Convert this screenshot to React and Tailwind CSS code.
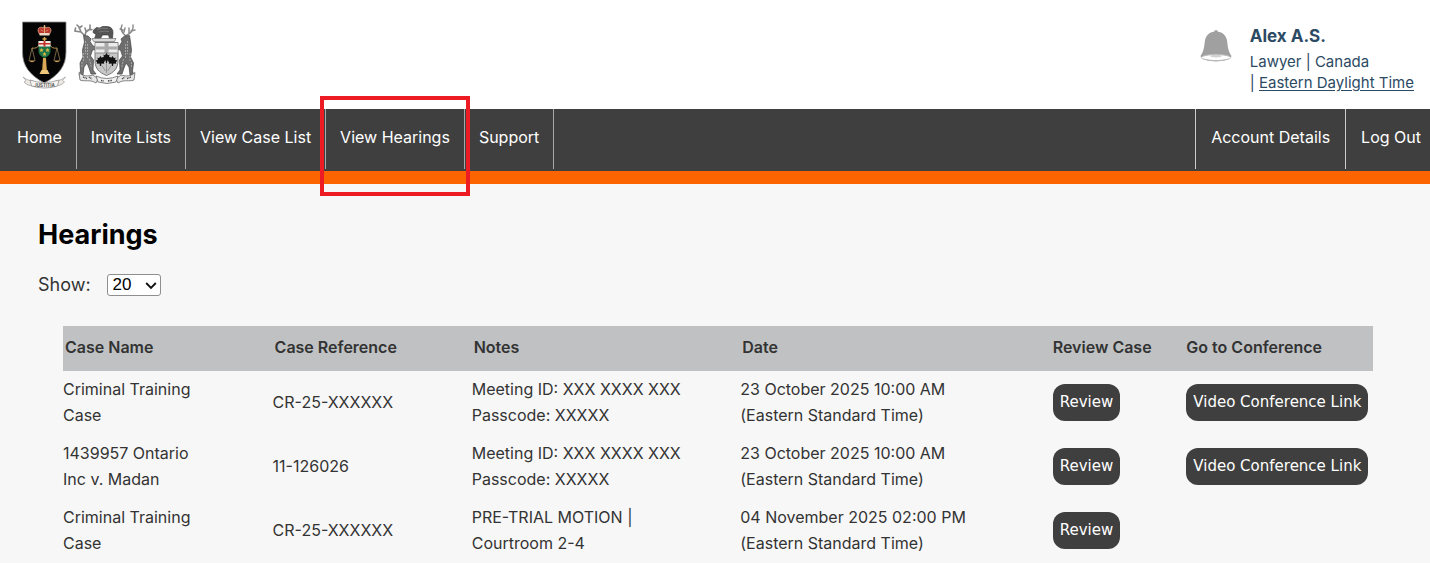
import { useState } from "react";

const mainLinks = ["Home", "Invite Lists", "View Case List", "View Hearings", "Support"];
const accountLinks = ["Account Details", "Log Out"];

const columns = [
  { label: "Case Name", width: "w-[16%]" },
  { label: "Case Reference", width: "w-[15.2%]" },
  { label: "Notes", width: "w-[20.5%]" },
  { label: "Date", width: "w-[23.7%]" },
  { label: "Review Case", width: "w-[10.2%]" },
  { label: "Go to Conference", width: "w-[14.4%]" },
];

const hearings = [
  {
    id: 1,
    name: "Criminal Training Case",
    reference: "CR-25-XXXXXX",
    notes: "Meeting ID: XXX XXXX XXX Passcode: XXXXX",
    date: "23 October 2025 10:00 AM (Eastern Standard Time)",
    conference: true,
  },
  {
    id: 2,
    name: "1439957 Ontario Inc v. Madan",
    reference: "11-126026",
    notes: "Meeting ID: XXX XXXX XXX Passcode: XXXXX",
    date: "23 October 2025 10:00 AM (Eastern Standard Time)",
    conference: true,
  },
  {
    id: 3,
    name: "Criminal Training Case",
    reference: "CR-25-XXXXXX",
    notes: "PRE-TRIAL MOTION | Courtroom 2-4",
    date: "04 November 2025 02:00 PM (Eastern Standard Time)",
    conference: false,
  },
];

export default function App() {
  const [pageSize, setPageSize] = useState("20");

  return (
    <div className="min-h-screen bg-[#f7f7f7] font-['Inter',sans-serif] text-base text-[#333]">
      <Header />
      <NavBar />

      <main className="pt-[33px] pl-[38px] pr-[57px]">
        <h1 className="text-[27px] leading-9 font-bold text-black">Hearings</h1>

        <div className="flex items-center gap-4 mt-4">
          <label htmlFor="page-size" className="text-lg leading-8">
            Show:
          </label>
          <div className="relative">
            <select
              id="page-size"
              value={pageSize}
              onChange={(e) => setPageSize(e.target.value)}
              className="block appearance-none w-[54px] h-[22px] pl-[5px] bg-white border border-[#8f8f8f] rounded-[3px] font-['Liberation_Sans',sans-serif] text-[17px] leading-5 text-black"
            >
              <option>10</option>
              <option>20</option>
              <option>50</option>
            </select>
            <svg viewBox="0 0 12 8" className="absolute right-1 top-2 w-3 h-2 pointer-events-none" aria-hidden="true">
              <path d="M1.2 1 6 5.8 10.8 1" fill="none" stroke="#111" strokeWidth="1.9" />
            </svg>
          </div>
        </div>

        <div className="mt-[25px] pl-[25px]">
          <table className="w-full table-fixed border-collapse text-left">
            <thead>
              <tr className="bg-[#bfc1c3]">
                {columns.map((col) => (
                  <th key={col.label} className={`${col.width} h-[45px] px-0.5 pb-1 font-semibold whitespace-nowrap`}>
                    {col.label}
                  </th>
                ))}
              </tr>
            </thead>
            <tbody>
              {hearings.map((hearing) => (
                <HearingRow key={hearing.id} hearing={hearing} />
              ))}
            </tbody>
          </table>
        </div>
      </main>
    </div>
  );
}

function Header() {
  return (
    <header className="flex justify-between bg-white pt-[21px] pb-4 pl-5 pr-4">
      <div className="flex gap-1.5">
        <JusticeCrest />
        <OntarioArms />
      </div>

      <div className="flex gap-[17px] text-[#2c4a63]">
        <BellIcon />
        <div>
          <p className="text-[17px] leading-[30px] font-bold">Alex A.S.</p>
          <p className="text-[15px] leading-[21px]">Lawyer | Canada</p>
          <p className="text-[15px] leading-[21px]">
            |{" "}
            <a href="#timezone" className="underline underline-offset-2">
              Eastern Daylight Time
            </a>
          </p>
        </div>
      </div>
    </header>
  );
}

function NavBar() {
  return (
    <nav className="flex justify-between bg-[#3f3f3f] border-b-[13px] border-[#fb6400] text-white">
      <ul className="flex pb-0.5 pl-[3px]">
        {mainLinks.map((label) => (
          <li key={label} className="relative border-r border-[#aaa]">
            <NavLink label={label} className="px-3.5" />
            {label === "View Hearings" && (
              <span className="absolute -top-[13px] -bottom-[27px] -left-1.5 -right-1.5 border-4 border-[#ed1c24] z-10 pointer-events-none" />
            )}
          </li>
        ))}
      </ul>
      <ul className="flex pb-0.5">
        {accountLinks.map((label) => (
          <li key={label} className="border-l border-[#ccc] last:-mr-1.5">
            <NavLink label={label} className="px-[15px]" />
          </li>
        ))}
      </ul>
    </nav>
  );
}

function NavLink({ label, className }) {
  return (
    <a href="#nav" className={`block pt-4 pb-5 leading-6 whitespace-nowrap ${className}`}>
      {label}
    </a>
  );
}

function HearingRow({ hearing }) {
  return (
    <tr>
      <td className="pt-[5px] pb-[7px]">
        <div className="max-w-36 leading-[26px]">{hearing.name}</div>
      </td>
      <td className="pt-[5px] pb-[7px]">{hearing.reference}</td>
      <td className="pt-[5px] pb-[7px]">
        <div className="max-w-56 leading-[26px]">{hearing.notes}</div>
      </td>
      <td className="pt-[5px] pb-[7px]">
        <div className="max-w-60 leading-[26px]">{hearing.date}</div>
      </td>
      <td className="px-0.5 pt-[5px] pb-[7px]">
        <PillButton>Review</PillButton>
      </td>
      <td className="px-0.5 pt-[5px] pb-[7px]">
        {hearing.conference && <PillButton>Video Conference Link</PillButton>}
      </td>
    </tr>
  );
}

function PillButton({ children }) {
  return (
    <button
      type="button"
      className="block h-[37px] px-[7px] bg-[#3f3f3f] rounded-xl font-['DejaVu_Sans',sans-serif] text-[15px] text-white whitespace-nowrap"
    >
      {children}
    </button>
  );
}

function BellIcon() {
  return (
    <svg viewBox="0 0 34 34" className="w-[34px] h-[34px] mt-2" aria-hidden="true">
      <circle cx="17" cy="3" r="2" fill="#aaa" />
      <path
        d="M17 2.500C10.500 2.500 6.500 6.500 5.800 12.500C5.200 18 4.800 22 1.500 27c1 3.800 8.500 5.400 15.500 5.400S31.500 30.800 32.500 27c-3.300-5-3.700-9-4.300-14.500C27.500 6.500 23.500 2.500 17 2.500z"
        fill="#a0a0a0"
      />
      <ellipse cx="17" cy="28.500" rx="14.600" ry="3" fill="#fff" stroke="#bbb" strokeWidth="1" />
      <path d="M11 26.500q6-1.600 12 0l-1 1.500q-5 .8-10 0z" fill="#d2d2d2" />
    </svg>
  );
}

function JusticeCrest() {
  return (
    <svg viewBox="0 0 48 70" className="w-12 h-[70px]" role="img" aria-label="Court crest">
      <path d="M2.500 1h43.500v30c0 14-7 23-21.700 31C9.500 54 2.500 45 2.500 31z" fill="#050505" stroke="#8e8e8e" strokeWidth=".8" />
      {/* crown */}
      <path d="M19.500 13c-3-4-1-8.500 4-6 0-2 2-2 2 0 5-2.500 7 2 4 6z" fill="#b8342d" stroke="#dcab82" strokeWidth=".8" />
      <path d="M19.500 12h10v2.500h-10z" fill="#ecd8c4" />
      <path d="M24.500 4v8M23.500 5h2M21 8.500l2 2M28 8.500l-2 2" stroke="#e8b37c" strokeWidth=".9" />
      {/* scales */}
      <path d="M24.500 16v5M22.500 18h4" stroke="#d9a94e" strokeWidth="1.500" />
      <path d="M12 27q5 1 7-3M37 27q-5 1-7-3" fill="none" stroke="#b68b45" strokeWidth="1" />
      <path d="M12 27 9 39.500M12 27l3 12.500M37 27l-3 12.500M37 27l3 12.500" stroke="#c3a36c" strokeWidth=".6" />
      <path d="M8.500 39.500h7q-3.500 3.500-7 0zM33.500 39.500h7q-3.500 3.500-7 0z" fill="#c79d56" />
      {/* shield on the column */}
      <path d="M18.500 20h12v9.500c0 4-2.500 6-6 7.500-3.500-1.500-6-3.500-6-7.500z" fill="#1e7446" />
      <path d="M18.500 20h12v5.500h-12z" fill="#f3ece6" />
      <path d="M23.500 20h2v5.500h-2zM18.500 22h12v1.500h-12z" fill="#c5302c" />
      <path d="m21.500 27 .7 1.300 1.300.2-.9 1 .2 1.400-1.300-.6-1.300.6.2-1.400-.9-1 1.300-.2zM27.500 27l.7 1.300 1.300.2-.9 1 .2 1.400-1.300-.6-1.300.6.2-1.400-.9-1 1.300-.2zM24.500 31l.7 1.300 1.300.2-.9 1 .2 1.400-1.300-.6-1.300.6.2-1.400-.9-1 1.300-.2z" fill="#d7b84d" />
      <path d="M23 37h3l.8 12h-4.600z" fill="#d9a857" />
      <path d="M21.500 49h6l2 4h-10z" fill="#f0c87b" />
      {/* ribbon */}
      <path d="M3 56c3 2 5 3.500 10 4v5c-4-.5-6-1-9-4l2-1.500zM45.500 56c-3 2-5 3.500-10 4v5c4-.5 6-1 9-4l-2-1.500z" fill="#eee9e2" stroke="#999" strokeWidth=".7" />
      <path d="M10 59q14 5 29 0l-1.500 6q-13 4-26 0z" fill="#f7f5f1" stroke="#888" strokeWidth=".7" />
      <text x="24.500" y="65.500" textAnchor="middle" fontSize="4.500" fontWeight="700" fill="#555">
        JUSTITIA
      </text>
    </svg>
  );
}

function OntarioArms() {
  return (
    <svg viewBox="0 0 66 62" className="w-[66px] h-[62px] mt-0.5" role="img" aria-label="Ontario coat of arms">
      {/* bear */}
      <path d="m20.500 15.500 1.500-4-3-2 .5-2.500 3-2.500 3 .5 3-1.500h5c4 .5 5.500 3 5.500 6l-.5 6h-3l-1-3.500h-6l-2 3.500z" fill="#555" stroke="#333" strokeWidth=".6" />
      <path d="M23 6.500q5-2 11-1M25 9q5-1.500 10-.5" fill="none" stroke="#888" strokeWidth=".7" />
      <path d="M18 15.500h24l-1.500 3h-21z" fill="#d9d9d9" stroke="#777" strokeWidth=".7" />
      {/* moose on the left */}
      <path d="M11 13 7 9 1 8l.5-3M7 9 5 4 3 2M5 5 8 3M11 13l1-5-1-3M12 9l4-3V2M14 7l4-.5" fill="none" stroke="#888" strokeWidth="1.600" strokeLinecap="round" />
      <path d="M9.500 12.500 14 13l3 3-1 2.500 3 4.500 4 1 .5 2-5 1-2 6 3 4-.5 10 3 4h-5l-2-6-2-5-3 4-1 8H5l1.500-4-.5-8 3-6-.5-7 2-8z" fill="#757575" stroke="#444" strokeWidth=".7" />
      <path d="M11.500 18v13M13.500 21v15M9.500 30v9M15.500 36l2 9M8 39v6" stroke="#b5b5b5" strokeWidth=".8" strokeDasharray="2 1" />
      {/* deer on the right */}
      <path d="M52 13c-4-3-6-7-4-11M53 12c3-1 7-5 6-10M49 7l-3-1M57 8l4-1M50 9l1-4M55 10V5" fill="none" stroke="#888" strokeWidth="1.400" strokeLinecap="round" />
      <path d="m55.500 12.500-5 .5-3.500 3 1 2.500-2.500 4.500-4 1v2l5 1 2 6-3 4 .5 10-3 4h5l2-6 2-5 3 4 1 8h4l-1.500-4 1-8-3-6 1-7-1-8z" fill="#6d6d6d" stroke="#444" strokeWidth=".7" />
      <path d="M53.500 18v13M51.500 21v15M56 30v9M49.500 36l-2 9M57.500 39v6" stroke="#b5b5b5" strokeWidth=".8" strokeDasharray="2 1" />
      {/* shield */}
      <path d="M21 19.500h23v18c0 8-4 12-11.500 15-7.500-3-11.500-7-11.500-15z" fill="#c7c7c7" stroke="#777" strokeWidth="1" />
      <path d="M21.500 20h22v10h-22z" fill="#ececec" />
      <path d="M30.500 20h4v10h-4zM21.500 23.500h22v3h-22z" fill="#aaa" />
      <path d="M21.500 30h22" stroke="#777" strokeWidth=".8" />
      <g fill="#111">
        <path id="leaf" d="m26.500 33 1.500 2.200 1.500-.8-.3 2.600 2.300.5-1.600 1.800.4 1.500-2.900-.3-.4 2.500h-1l-.4-2.500-2.900.3.400-1.500-1.600-1.800 2.300-.5-.3-2.600 1.500.8z" />
        <use href="#leaf" x="12" />
        <use href="#leaf" x="6" y="-3" />
      </g>
      <path d="M32.500 40v10M27.500 42l4 6M37.500 42l-4 6" stroke="#888" strokeWidth=".8" />
      {/* motto ribbon */}
      <path d="M5 49.500c4 4 9 4 14 2.500l5 4-2 4c-6-4-11-1-16-3zM61 49.500c-4 4-9 4-14 2.500l-5 4 2 4c6-4 11-1 16-3z" fill="#e7e7e7" stroke="#666" strokeWidth=".8" />
      <path d="M22 53q10.500 5 22 0l-2 6q-9 3-18 0z" fill="#f1f1f1" stroke="#666" strokeWidth=".8" />
      <path d="m9 54 4 1.500M15 54l3 2M27 57.500l3 .6M34 58l4-.6M48 56l3-2M53 55.500l4-1.500" stroke="#444" strokeWidth="1.500" strokeDasharray="1 .6" />
    </svg>
  );
}
